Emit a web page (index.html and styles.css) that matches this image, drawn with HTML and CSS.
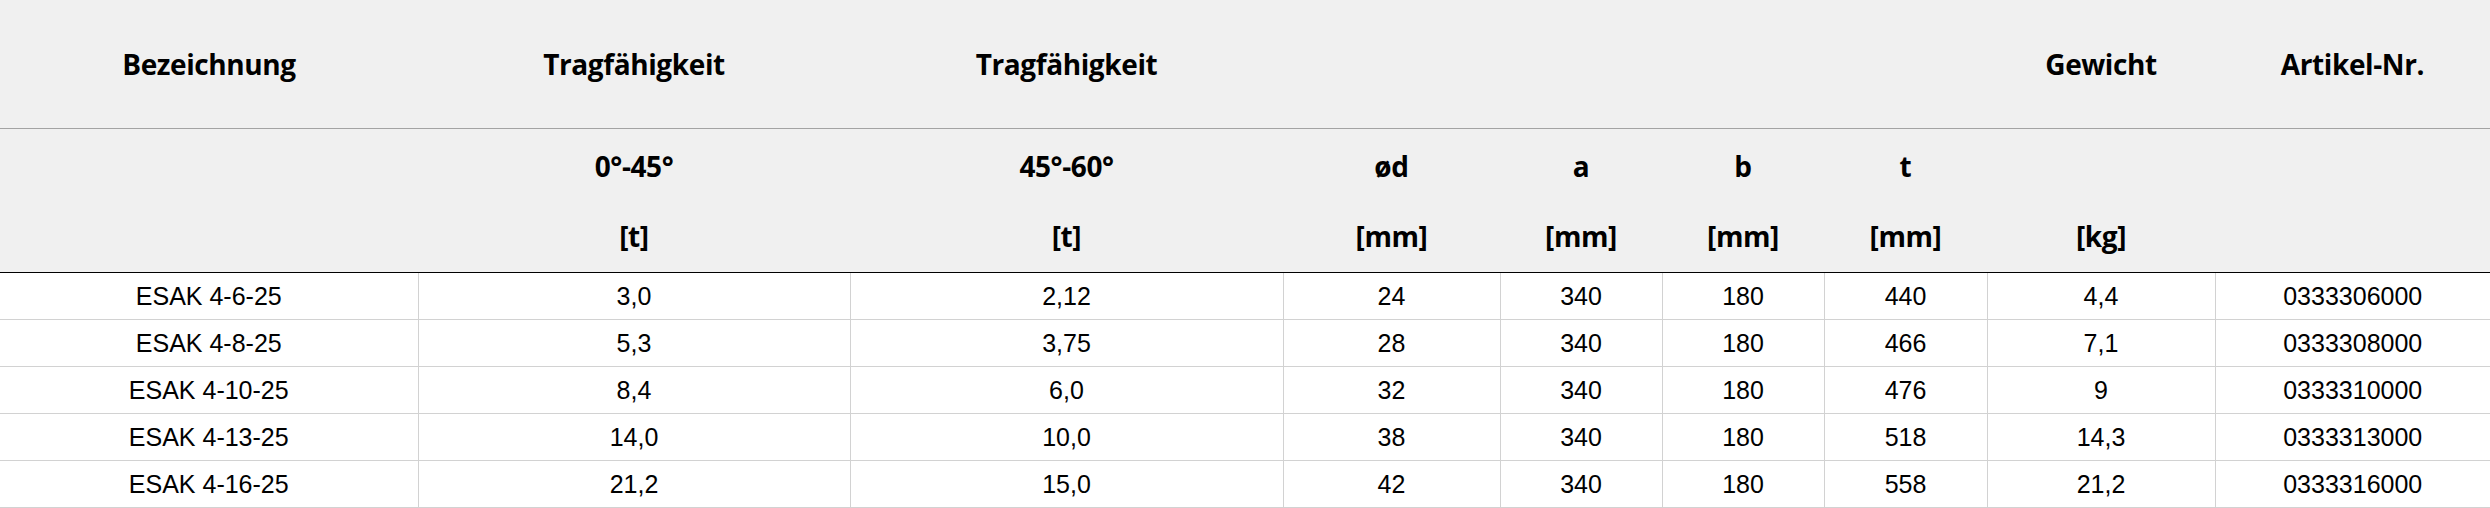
FILE: index.html
```html
<!DOCTYPE html>
<html lang="de">
<head>
<meta charset="utf-8">
<title>ESAK</title>
<link rel="stylesheet" href="styles.css">
</head>
<body>
<table class="spec">
  <colgroup>
    <col class="c1"><col class="c2"><col class="c3"><col class="c4"><col class="c5"><col class="c6"><col class="c7"><col class="c8"><col class="c9">
  </colgroup>
  <thead>
    <tr class="h1">
      <th>Bezeichnung</th>
      <th>Tragfähigkeit</th>
      <th>Tragfähigkeit</th>
      <th></th>
      <th></th>
      <th></th>
      <th></th>
      <th>Gewicht</th>
      <th>Artikel-Nr.</th>
    </tr>
    <tr class="h2">
      <th><span class="l1"></span><span class="l2"></span></th>
      <th><span class="l1">0°-45°</span><span class="l2">[t]</span></th>
      <th><span class="l1">45°-60°</span><span class="l2">[t]</span></th>
      <th><span class="l1">ød</span><span class="l2">[mm]</span></th>
      <th><span class="l1">a</span><span class="l2">[mm]</span></th>
      <th><span class="l1">b</span><span class="l2">[mm]</span></th>
      <th><span class="l1">t</span><span class="l2">[mm]</span></th>
      <th><span class="l1"></span><span class="l2">[kg]</span></th>
      <th><span class="l1"></span><span class="l2"></span></th>
    </tr>
  </thead>
  <tbody>
    <tr><td>ESAK 4-6-25</td><td>3,0</td><td>2,12</td><td>24</td><td>340</td><td>180</td><td>440</td><td>4,4</td><td>0333306000</td></tr>
    <tr><td>ESAK 4-8-25</td><td>5,3</td><td>3,75</td><td>28</td><td>340</td><td>180</td><td>466</td><td>7,1</td><td>0333308000</td></tr>
    <tr><td>ESAK 4-10-25</td><td>8,4</td><td>6,0</td><td>32</td><td>340</td><td>180</td><td>476</td><td>9</td><td>0333310000</td></tr>
    <tr><td>ESAK 4-13-25</td><td>14,0</td><td>10,0</td><td>38</td><td>340</td><td>180</td><td>518</td><td>14,3</td><td>0333313000</td></tr>
    <tr><td>ESAK 4-16-25</td><td>21,2</td><td>15,0</td><td>42</td><td>340</td><td>180</td><td>558</td><td>21,2</td><td>0333316000</td></tr>
  </tbody>
</table>
</body>
</html>
```
FILE: styles.css
```css
html, body {
  margin: 0;
  padding: 0;
  background: #ffffff;
}
.spec {
  width: 2490px;
  table-layout: fixed;
  border-collapse: collapse;
  border-spacing: 0;
}
.c1 { width: 418px; }
.c2 { width: 432px; }
.c3 { width: 433px; }
.c4 { width: 217px; }
.c5 { width: 162px; }
.c6 { width: 162px; }
.c7 { width: 163px; }
.c8 { width: 228px; }
.c9 { width: 275px; }

.spec th {
  background: #f0f0f0;
  font-family: "Open Sans", "Noto Sans", sans-serif;
  font-weight: 700;
  font-size: 28px;
  letter-spacing: -0.4px;
  color: #000000;
  text-align: center;
  vertical-align: middle;
  padding: 0;
}
.h1 th {
  height: 128px;
  border-bottom: 1px solid #a3a3a3;
  line-height: 30px;
}
.h2 th {
  height: 143px;
  border-bottom: 1px solid #000000;
}
.h2 .l1, .h2 .l2 {
  display: block;
  height: 30px;
  line-height: 30px;
}
.h2 .l2 {
  margin-top: 40px;
}
.spec td {
  height: 46px;
  padding: 0;
  line-height: 30px;
  font-family: "Liberation Sans", Arial, sans-serif;
  font-size: 25px;
  color: #000000;
  text-align: center;
  vertical-align: middle;
  border-bottom: 1px solid #d2d2d2;
  border-left: 1px solid #d2d2d2;
}
.spec td:first-child {
  border-left: none;
}
```
